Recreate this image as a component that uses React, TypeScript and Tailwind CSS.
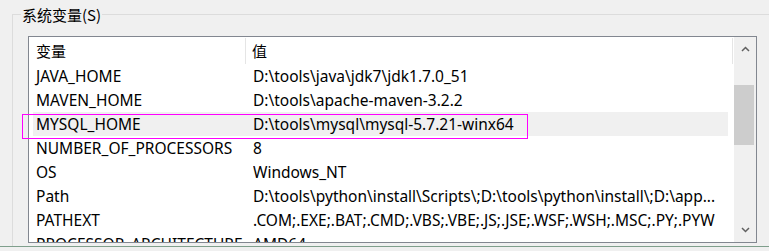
import React from "react";

const rows: [string, string][] = [
  ["JAVA_HOME", "D:\\tools\\java\\jdk7\\jdk1.7.0_51"],
  ["MAVEN_HOME", "D:\\tools\\apache-maven-3.2.2"],
  ["MYSQL_HOME", "D:\\tools\\mysql\\mysql-5.7.21-winx64"],
  ["NUMBER_OF_PROCESSORS", "8"],
  ["OS", "Windows_NT"],
  ["Path", "D:\\tools\\python\\install\\Scripts\\;D:\\tools\\python\\install\\;D:\\app..."],
  ["PATHEXT", ".COM;.EXE;.BAT;.CMD;.VBS;.VBE;.JS;.JSE;.WSF;.WSH;.MSC;.PY;.PYW"],
  ["PROCESSOR_ARCHITECTURE", "AMD64"],
];

const latin = { fontFamily: '"Noto Sans", "Noto Sans CJK SC", sans-serif' };
const cjk = { fontFamily: '"Noto Sans CJK SC", sans-serif' };

export default function App() {
  return (
    <div className="relative w-[769px] h-[251px] overflow-hidden bg-[#f0f0f0] text-black flex flex-col">
      <div className="h-[246px] pl-[12px] pt-[14px] flex flex-col">
        <div className="relative flex-1 border-l border-t border-[#dcdcdc] pl-[15px] pt-[21px]">
          <div
            className="absolute left-[8px] top-[-9px] px-[1px] bg-[#f0f0f0] text-[15px] leading-[18px]"
            style={cjk}
          >
            系统变量(S)
          </div>
          <div className="w-[729px] h-[207px] border border-[#828790] bg-white flex overflow-hidden">
            <div className="w-[705px] pl-[4px] flex flex-col">
              <div className="h-[27px] shrink-0 flex items-center pt-[1px]">
                <div
                  className="w-[213px] h-[26px] pl-[3px] flex items-center border-r border-[#e5e5e5] text-[15px]"
                  style={cjk}
                >
                  变量
                </div>
                <div
                  className="w-[487px] h-[26px] pl-[6px] flex items-center border-r border-[#e5e5e5] text-[15px]"
                  style={cjk}
                >
                  值
                </div>
              </div>
              {rows.map(([k, v], i) => (
                <div
                  key={k}
                  className={
                    "h-[24px] shrink-0 w-[695px] flex items-center pt-[2px] text-[15.5px] whitespace-nowrap " +
                    (i === 2 ? "bg-[#f0f0f0]" : "")
                  }
                  style={latin}
                >
                  <div className="w-[220px] pl-[3px] overflow-hidden">{k}</div>
                  <div className="flex-1 overflow-hidden">{v}</div>
                </div>
              ))}
            </div>
            <div className="w-[22px] ml-[1px] bg-[#f0f0f0] flex flex-col items-center">
              <div className="h-[24px] w-full flex items-center justify-center">
                <svg width="9" height="6" viewBox="0 0 9 6">
                  <path d="M1 5 L4.5 1.5 L8 5" fill="none" stroke="#606060" strokeWidth="1.5" />
                </svg>
              </div>
              <div className="flex-1 w-full pt-[24px]">
                <div className="h-[60px] w-[20px] bg-[#cdcdcd]" />
              </div>
              <div className="h-[24px] w-full flex items-center justify-center">
                <svg width="9" height="6" viewBox="0 0 9 6">
                  <path d="M1 1 L4.5 4.5 L8 1" fill="none" stroke="#606060" strokeWidth="1.5" />
                </svg>
              </div>
            </div>
          </div>
        </div>
      </div>
      <div className="h-[1px] bg-[#7f9f8c]" />
      <div className="flex-1 bg-[#f0f0f0]" />
      <div className="absolute left-[22px] top-[114px] w-[506px] h-[25px] border border-[#ff00ff]" />
    </div>
  );
}
